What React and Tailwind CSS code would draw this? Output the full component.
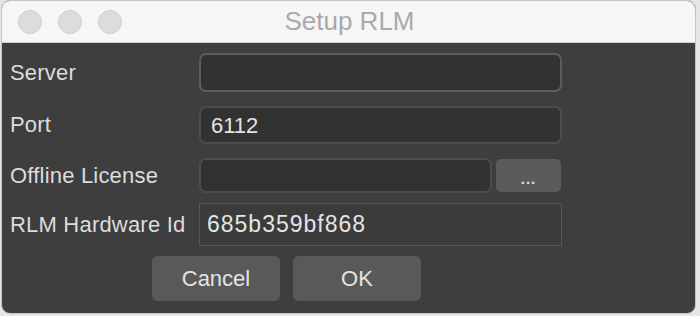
import React from "react";

const font = { fontFamily: '"Liberation Sans", Arial, sans-serif' };

const Row = ({ label, children, className = "" }) => (
  <div className={"flex items-center " + className}>
    <div className="w-[197px] pl-[8px] text-[22px] text-[#dcdcdc] leading-none whitespace-nowrap tracking-[0.2px]">
      {label}
    </div>
    {children}
  </div>
);

const App = () => {
  return (
    <div className="w-[700px] h-[316px] bg-[#e6e6e6] pl-[1px] pr-[4px] pb-[2px]" style={font}>
      <div className="w-[695px] h-[314px] rounded-[9px] overflow-hidden border border-[#c4c4c4] flex flex-col bg-[#3e3e3e]">
        {/* Title bar */}
        <div className="relative h-[42px] bg-[#f6f6f6] border-b border-[#cfcfcf] flex items-center shrink-0">
          <div className="flex gap-[16px] pl-[16px]">
            <span className="w-[24px] h-[24px] rounded-full bg-[#dcdcdc] border border-[#cdcdcd]" />
            <span className="w-[24px] h-[24px] rounded-full bg-[#dcdcdc] border border-[#cdcdcd]" />
            <span className="w-[24px] h-[24px] rounded-full bg-[#dcdcdc] border border-[#cdcdcd]" />
          </div>
          <div className="absolute inset-0 flex items-center justify-center text-[26px] text-[#a9a9a9] pl-[2px]">
            Setup RLM
          </div>
        </div>

        {/* Body */}
        <div className="flex flex-col pt-[10px]">
          <Row label="Server">
            <div className="w-[363px] h-[39px] rounded-[7px] border-2 border-[#5c5c5c] bg-[#323232]" />
          </Row>
          <Row label="Port" className="mt-[14px]">
            <div className="w-[363px] h-[38px] rounded-[7px] border-2 border-[#4c4c4c] bg-[#323232] flex items-center pl-[10px] text-[22px] text-[#e4e4e4]">
              6112
            </div>
          </Row>
          <Row label="Offline License" className="mt-[14px]">
            <div className="w-[293px] h-[35px] rounded-[7px] border-2 border-[#4c4c4c] bg-[#323232]" />
            <button className="ml-[4px] w-[65px] h-[33px] rounded-[5px] bg-[#5b5b5b] text-[#e0e0e0] text-[15px] font-bold leading-none pt-[6px] tracking-[1px]">
              ...
            </button>
          </Row>
          <Row label="RLM Hardware Id" className="mt-[10px]">
            <div className="w-[363px] h-[43px] border border-[#555555] bg-[#3b3b3b] flex items-center pl-[7px] text-[23px] text-[#e4e4e4] tracking-[1px]">
              685b359bf868
            </div>
          </Row>
          <div className="flex pl-[150px] gap-[13px] mt-[10px]">
            <button className="w-[128px] h-[45px] rounded-[6px] bg-[#595959] text-[22px] text-[#e4e4e4]">
              Cancel
            </button>
            <button className="w-[128px] h-[45px] rounded-[6px] bg-[#595959] text-[22px] text-[#e4e4e4]">
              OK
            </button>
          </div>
        </div>
      </div>
    </div>
  );
};

export default App;
